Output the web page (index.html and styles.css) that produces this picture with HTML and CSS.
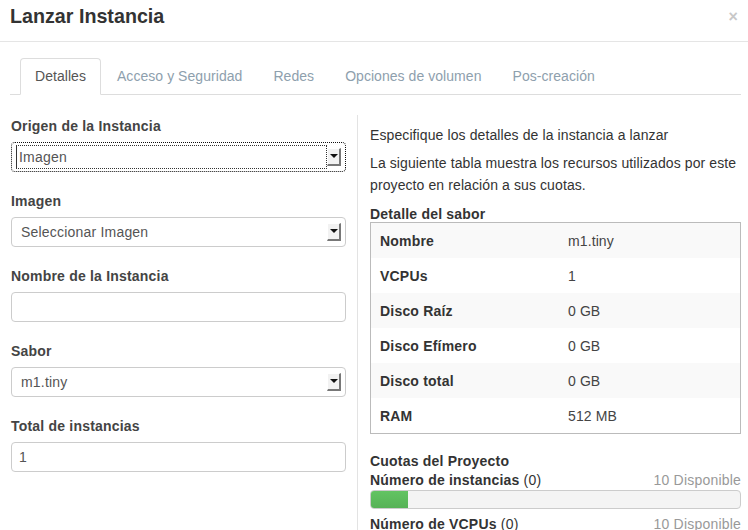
FILE: index.html
```html
<!DOCTYPE html>
<html lang="es">
<head>
<meta charset="utf-8">
<title>Lanzar Instancia</title>
<link rel="stylesheet" href="styles.css">
</head>
<body>
<div class="modal">
  <div class="modal-header">
    <h3 class="title">Lanzar Instancia</h3>
    <span class="close">&times;</span>
  </div>
  <div class="modal-body">
    <ul class="nav-tabs">
      <li class="tab active">Detalles</li>
      <li class="tab">Acceso y Seguridad</li>
      <li class="tab">Redes</li>
      <li class="tab">Opciones de volumen</li>
      <li class="tab">Pos-creación</li>
    </ul>
    <div class="tab-content">
      <div class="left-col">
        <div class="group">
          <label class="label">Origen de la Instancia</label>
          <div class="select focused"><span class="select-text">Imagen</span><span class="arrow"></span></div>
        </div>
        <div class="group">
          <label class="label">Imagen</label>
          <div class="select"><span class="select-text">Seleccionar Imagen</span><span class="arrow"></span></div>
        </div>
        <div class="group">
          <label class="label">Nombre de la Instancia</label>
          <div class="input"></div>
        </div>
        <div class="group">
          <label class="label">Sabor</label>
          <div class="select"><span class="select-text">m1.tiny</span><span class="arrow"></span></div>
        </div>
        <div class="group">
          <label class="label">Total de instancias</label>
          <div class="input">1</div>
        </div>
      </div>
      <div class="right-col">
        <p class="para">Especifique los detalles de la instancia a lanzar</p>
        <p class="para">La siguiente tabla muestra los recursos utilizados por este proyecto en relación a sus cuotas.</p>
        <h4 class="heading">Detalle del sabor</h4>
        <div class="flavor-table">
          <div class="row shaded"><span class="key">Nombre</span><span class="val">m1.tiny</span></div>
          <div class="row"><span class="key">VCPUs</span><span class="val">1</span></div>
          <div class="row shaded"><span class="key">Disco Raíz</span><span class="val">0 GB</span></div>
          <div class="row"><span class="key">Disco Efímero</span><span class="val">0 GB</span></div>
          <div class="row shaded"><span class="key">Disco total</span><span class="val">0 GB</span></div>
          <div class="row"><span class="key">RAM</span><span class="val">512 MB</span></div>
        </div>
        <h4 class="heading quota-heading">Cuotas del Proyecto</h4>
        <div class="quota-line"><span><strong>Número de instancias</strong> (0)</span><span class="avail">10 Disponible</span></div>
        <div class="bar"><div class="bar-fill" style="width:10%"></div></div>
        <div class="quota-line"><span><strong>Número de VCPUs</strong> (0)</span><span class="avail">10 Disponible</span></div>
      </div>
    </div>
  </div>
</div>
</body>
</html>
```

FILE: styles.css
```css
* { box-sizing: border-box; }
html, body { margin: 0; padding: 0; background: #fff; }
body {
  font-family: "Liberation Sans", Arial, sans-serif;
  font-size: 14px;
  letter-spacing: 0.1px;
  color: #333;
  width: 748px;
  height: 530px;
  overflow: hidden;
}
.modal-header {
  height: 42px;
  border-bottom: 1px solid #e5e5e5;
  display: flex;
  align-items: flex-start;
  justify-content: space-between;
  padding: 5px 8px 0 10px;
}
.title {
  margin: 0;
  font-size: 19.7px;
  letter-spacing: 0;
  line-height: 22px;
  font-weight: bold;
  color: #333;
}
.close {
  font-size: 16px;
  line-height: 20px;
  color: #c8c8c8;
  font-weight: bold;
  padding: 2px 2px 0 0;
}
.modal-body {
  padding: 16px 7px 0 10px;
}
.nav-tabs {
  list-style: none;
  margin: 0;
  padding: 0 0 0 10px;
  display: flex;
  border-bottom: 1px solid #ddd;
  height: 37px;
}
.tab {
  padding: 0 14px;
  margin-right: 1px;
  height: 37px;
  line-height: 35px;
  font-size: 14px;
  letter-spacing: 0.05px;
  color: #8ea0ad;
  border: 1px solid transparent;
  border-radius: 4px 4px 0 0;
}
.tab.active {
  color: #555;
  border-color: #ddd;
  border-bottom-color: #fff;
  background: #fff;
}
.tab-content {
  display: flex;
  margin-top: 20px;
}
.left-col {
  width: 348px;
  padding: 2px 11px 0 1px;
  border-right: 1px solid #e3e3e3;
  height: 420px;
}
.group { margin-bottom: 20px; }
.label {
  display: block;
  font-weight: bold;
  font-size: 14px;
  letter-spacing: 0.2px;
  line-height: 18px;
  color: #444;
  margin-bottom: 7px;
}
.select, .input {
  height: 30px;
  border: 1px solid #ccc;
  border-radius: 4px;
  display: flex;
  align-items: center;
  color: #555;
  letter-spacing: 0.2px;
}
.select { padding: 0 4px 0 9px; justify-content: space-between; }
.input { padding: 0 7px; }
.select.focused {
  border: 1px dotted #111;
  padding-left: 4px;
}
.select-text { display: flex; align-items: center; }
.focused .select-text {
  flex: 1;
  height: 24px;
  border: 1px dotted #333;
  border-left: 1px solid #333;
  padding-left: 2px;
}
.arrow {
  width: 14px;
  height: 18px;
  background: #f2f2f2;
  border-left: 1px solid #fff;
  border-top: 1px solid #fff;
  border-right: 2px solid #777;
  border-bottom: 2px solid #777;
  position: relative;
  flex: none;
}
.arrow::after {
  content: "";
  position: absolute;
  left: 2px;
  top: 5px;
  border-left: 4px solid transparent;
  border-right: 4px solid transparent;
  border-top: 4px solid #111;
}
.right-col {
  flex: 1;
  padding: 9px 0 0 12px;
}
.para {
  margin: 0 0 6px;
  line-height: 22px;
  color: #333;
}
.heading {
  margin: 10px 0 0;
  font-size: 14px;
  line-height: 16px;
  font-weight: bold;
  color: #333;
  letter-spacing: 0.2px;
}
.flavor-table {
  border: 1px solid #bbb;
}
.row {
  height: 35px;
  display: flex;
  align-items: center;
  padding-left: 9px;
}
.row.shaded { background: #f9f9f9; }
.key { width: 188px; font-weight: bold; color: #333; letter-spacing: 0.2px; }
.val { color: #444; }
.quota-heading { margin-top: 19px; margin-bottom: 1px; }
.quota-line {
  display: flex;
  justify-content: space-between;
  line-height: 20px;
  color: #333;
  letter-spacing: 0.2px;
}
.avail { color: #999; }
.bar {
  height: 19px;
  margin: 0 0 5px;
  border: 1px solid #ccc;
  border-radius: 4px;
  background: #f4f4f4;
  overflow: hidden;
}
.bar-fill {
  height: 100%;
  background: linear-gradient(#62c462, #57b257);
}
```
